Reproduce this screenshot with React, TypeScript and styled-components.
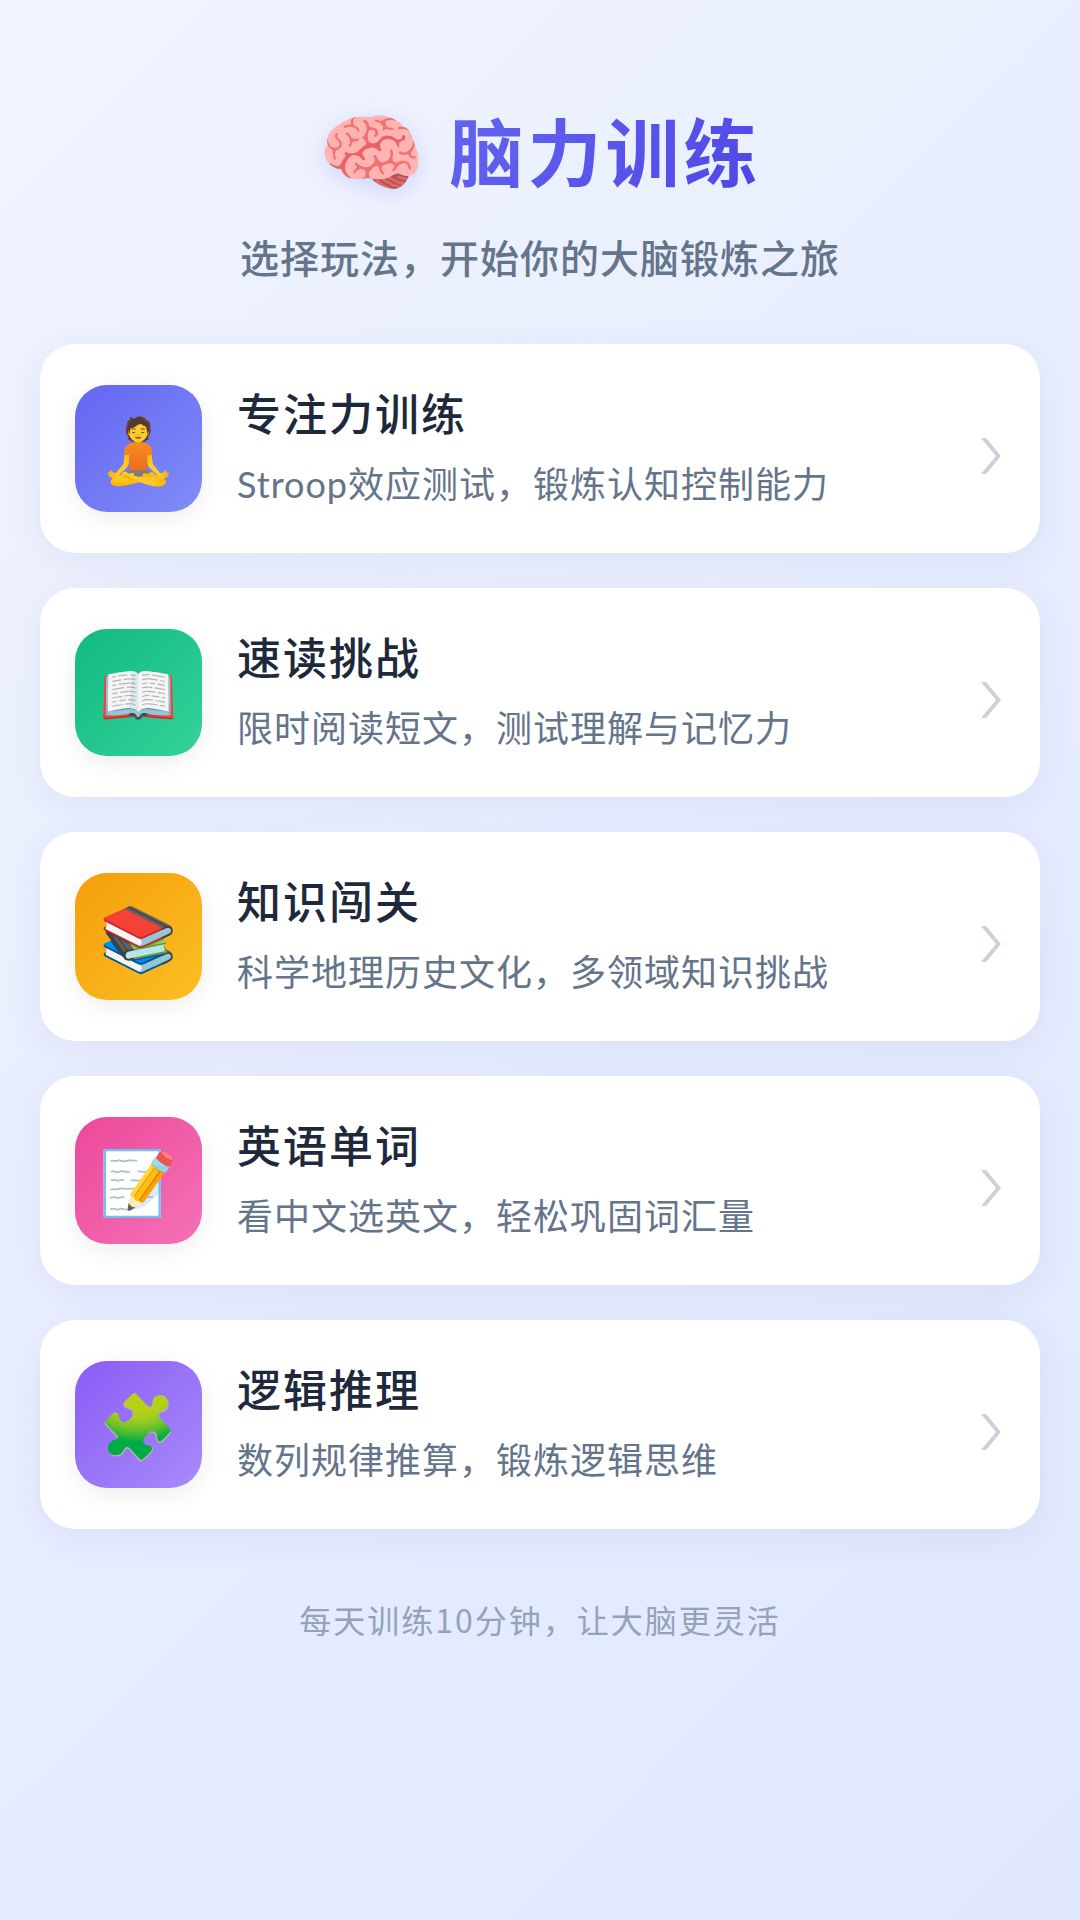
import React from 'react';
import styled, { createGlobalStyle } from 'styled-components';

const modes = [
    { icon: '🧘', title: '专注力训练', text: 'Stroop效应测试，锻炼认知控制能力', from: '#6366f1', to: '#818cf8' },
    { icon: '📖', title: '速读挑战', text: '限时阅读短文，测试理解与记忆力', from: '#10b981', to: '#34d399' },
    { icon: '📚', title: '知识闯关', text: '科学地理历史文化，多领域知识挑战', from: '#f59e0b', to: '#fbbf24' },
    { icon: '📝', title: '英语单词', text: '看中文选英文，轻松巩固词汇量', from: '#ec4899', to: '#f472b6' },
    { icon: '🧩', title: '逻辑推理', text: '数列规律推算，锻炼逻辑思维', from: '#8b5cf6', to: '#a78bfa' },
];

export default function App() {
    return (
        <Page>
            <GlobalStyle />
            <Header>
                <Heading>
                    <Brain>🧠</Brain>
                    <HeadingText>脑力训练</HeadingText>
                </Heading>
                <Subtitle>选择玩法，开始你的大脑锻炼之旅</Subtitle>
            </Header>
            <List>
                {modes.map(mode => (
                    <Card key={mode.title} type="button">
                        <Tile $from={mode.from} $to={mode.to}>{mode.icon}</Tile>
                        <Body>
                            <CardTitle>{mode.title}</CardTitle>
                            <CardText>{mode.text}</CardText>
                        </Body>
                        <Chevron viewBox="0 0 20 36" aria-hidden="true">
                            <path d="M0 0H5L20 18L5 36H0L15 18Z" fill="currentColor" />
                        </Chevron>
                    </Card>
                ))}
            </List>
            <Footer>每天训练10分钟，让大脑更灵活</Footer>
        </Page>
    );
}

const GlobalStyle = createGlobalStyle`
    * {
        box-sizing: border-box;
    }

    body {
        margin: 0;
        font-family: 'Noto Sans CJK SC', sans-serif;
    }
`;

const Page = styled.main`
    min-height: 100vh;
    padding: 96px 40px 80px;
    background: linear-gradient(135deg, #f0f4ff 0%, #e0e7ff 100%);
`;

const Header = styled.header`
    text-align: center;
`;

const Heading = styled.h1`
    display: flex;
    justify-content: center;
    align-items: center;
    gap: 20px;
    margin: 0;
    font-size: 74px;
    line-height: 96px;
    font-weight: 700;
    letter-spacing: 4px;
`;

const Brain = styled.span`
    padding-top: 10px;
    font-family: 'Noto Color Emoji', sans-serif;
    font-size: 86px;
    font-weight: 400;
    filter: drop-shadow(0 5px 10px rgba(99, 102, 241, 0.2));
`;

const HeadingText = styled.span`
    color: transparent;
    background: linear-gradient(135deg, #6366f1, #4f46e5);
    background-clip: text;
`;

const Subtitle = styled.p`
    margin: 25px 0 0;
    color: #64748b;
    font-size: 39px;
    line-height: 58px;
    font-weight: 500;
    letter-spacing: 1px;
`;

const List = styled.section`
    display: flex;
    flex-direction: column;
    gap: 35px;
    margin-top: 59px;
`;

const Card = styled.button`
    display: flex;
    align-items: center;
    gap: 35px;
    width: 100%;
    padding: 41px 39px 41px 35px;
    border: 0;
    border-radius: 35px;
    background: #fff;
    box-shadow: 0 8px 36px rgba(50, 60, 120, 0.07);
    font-family: inherit;
    text-align: left;
    cursor: pointer;
`;

const Tile = styled.span<{ $from: string; $to: string }>`
    display: flex;
    flex: none;
    align-items: center;
    justify-content: center;
    width: 127px;
    height: 127px;
    padding-top: 6px;
    border-radius: 32px;
    background: linear-gradient(135deg, ${p => p.$from}, ${p => p.$to});
    box-shadow: 0 6px 24px rgba(0, 0, 0, 0.07);
    font-family: 'Noto Color Emoji', sans-serif;
    font-size: 63px;
    line-height: 74px;
`;

const Body = styled.span`
    display: flex;
    flex: 1;
    flex-direction: column;
    gap: 18px;
    min-width: 0;
    padding-bottom: 1px;
`;

const CardTitle = styled.span`
    color: #1e293b;
    font-size: 44px;
    line-height: 54px;
    font-weight: 500;
    letter-spacing: 2px;
`;

const CardText = styled.span`
    color: #64748b;
    font-family: Lato, 'Noto Sans CJK SC', sans-serif;
    font-size: 36px;
    line-height: 54px;
    letter-spacing: 1px;
`;

const Chevron = styled.svg`
    flex: none;
    width: 20px;
    height: 36px;
    margin-top: 14px;
    color: #cbd1d8;
`;

const Footer = styled.footer`
    margin-top: 64px;
    color: #94a3b8;
    font-size: 32px;
    line-height: 52px;
    letter-spacing: 2px;
    text-align: center;
`;
